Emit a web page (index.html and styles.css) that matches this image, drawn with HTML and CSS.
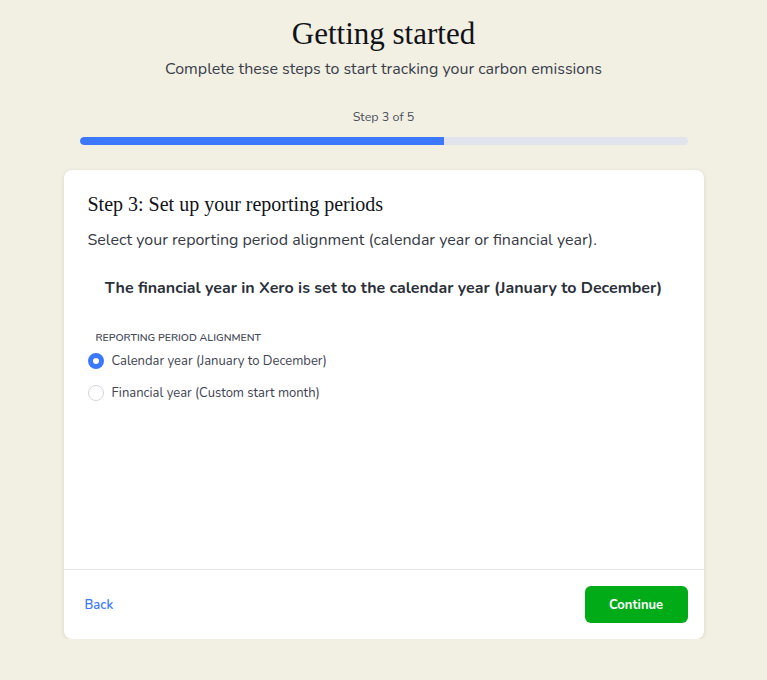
FILE: index.html
```html
<!DOCTYPE html>
<html lang="en">
<head>
<meta charset="utf-8">
<title>Getting started</title>
<link rel="stylesheet" href="styles.css">
</head>
<body>
<main class="page">
  <header class="intro">
    <h1 class="title">Getting started</h1>
    <p class="subtitle">Complete these steps to start tracking your carbon emissions</p>
  </header>
  <section class="progress">
    <div class="progress-label">Step 3 of 5</div>
    <div class="progress-track"><div class="progress-fill" style="width:60%"></div></div>
  </section>
  <section class="card">
    <div class="card-body">
      <h2 class="step-title">Step 3: Set up your reporting periods</h2>
      <p class="step-desc">Select your reporting period alignment (calendar year or financial year).</p>
      <p class="notice">The financial year in Xero is set to the calendar year (January to December)</p>
      <fieldset class="field">
        <legend class="field-label">Reporting period alignment</legend>
        <label class="radio-row">
          <span class="radio radio-checked"></span>
          <span class="radio-text">Calendar year (January to December)</span>
        </label>
        <label class="radio-row">
          <span class="radio"></span>
          <span class="radio-text">Financial year (Custom start month)</span>
        </label>
      </fieldset>
    </div>
    <footer class="card-footer">
      <a class="back" href="#">Back</a>
      <button class="continue" type="button">Continue</button>
    </footer>
  </section>
</main>
</body>
</html>
```
FILE: styles.css
```css
* { box-sizing: border-box; }
html, body { margin: 0; padding: 0; }
body {
  background: #f2efe3;
  font-family: "Nunito", "Open Sans", "Noto Sans", sans-serif;
  color: #363a45;
}
.page {
  width: 640px;
  margin: 0 auto;
  padding-top: 14px;
}
.intro { text-align: center; }
.title {
  margin: 0;
  font-family: "Liberation Serif", "Times New Roman", serif;
  font-weight: 400;
  font-size: 31px;
  line-height: 40px;
  color: #111318;
}
.subtitle {
  margin: 4px 0 0;
  font-size: 16px;
  line-height: 22px;
  color: #3a3f4c;
}
.progress {
  padding: 0 16px;
  margin-top: 28px;
}
.progress-label {
  text-align: center;
  font-size: 12.5px;
  line-height: 18px;
  color: #4a4f5c;
}
.progress-track {
  margin-top: 11px;
  height: 8px;
  border-radius: 4px;
  background: #e1e4ec;
  overflow: hidden;
}
.progress-fill {
  height: 100%;
  background: #3b78fd;
  border-radius: 4px 0 0 4px;
}
.card {
  margin-top: 25px;
  background: #fff;
  border-radius: 8px;
  box-shadow: 0 1px 4px rgba(60, 50, 20, 0.12);
}
.card-body {
  padding: 21px 24px 24px;
  height: 399px;
}
.step-title {
  margin: 0;
  font-family: "Liberation Serif", "Times New Roman", serif;
  font-weight: 400;
  font-size: 20px;
  line-height: 26px;
  color: #111318;
}
.step-desc {
  margin: 12px 0 0;
  font-size: 16px;
  line-height: 22px;
  color: #363a45;
}
.notice {
  margin: 26px 0 0;
  text-align: center;
  font-weight: 700;
  font-size: 16px;
  line-height: 22px;
  color: #2b2f3a;
}
.field {
  border: 0;
  margin: 31px 0 0;
  padding: 0;
}
.field-label {
  padding: 0 0 0 8px;
  font-size: 10.5px;
  font-weight: 600;
  text-transform: uppercase;
  line-height: 16px;
  color: #474c59;
}
.radio-row {
  display: flex;
  align-items: center;
  gap: 8px;
  margin-top: 7px;
  height: 16px;
}
.radio-row + .radio-row { margin-top: 16px; }
.radio {
  width: 16px;
  height: 16px;
  border-radius: 50%;
  border: 1px solid #d3d6de;
  background: #fff;
  flex: none;
}
.radio-checked {
  border: 5px solid #3b78fd;
}
.radio-text {
  font-size: 13px;
  color: #3e4350;
}
.card-footer {
  border-top: 1px solid #e5e7ec;
  padding: 16px 16px 16px 21px;
  display: flex;
  justify-content: space-between;
  align-items: center;
}
.back {
  color: #3b78fd;
  text-decoration: none;
  font-weight: 600;
  font-size: 13px;
}
.continue {
  width: 103px;
  height: 37px;
  border: 0;
  border-radius: 6px;
  background: #00ab18;
  color: #fff;
  font-family: inherit;
  font-weight: 700;
  font-size: 13px;
}
```
